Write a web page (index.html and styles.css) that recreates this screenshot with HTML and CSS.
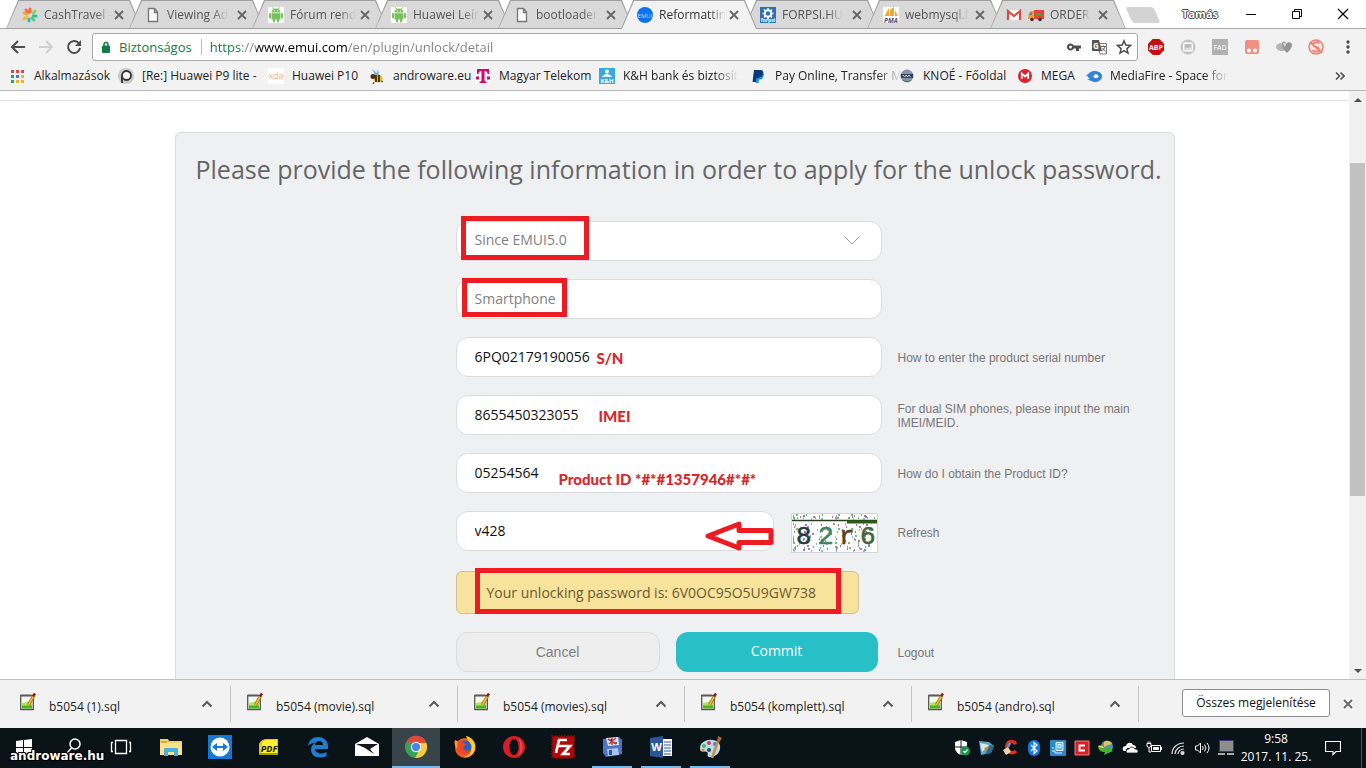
FILE: index.html
```html
<!DOCTYPE html>
<html lang="hu">
<head>
<meta charset="UTF-8" />
<meta name="viewport" content="width=device-width, initial-scale=1" />
<title>Reformatting</title>
<link rel="stylesheet" href="styles.css">
</head>
<body>

<!-- shared icons -->
<svg class="defs" aria-hidden="true">
  <symbol id="i-x" viewBox="0 0 10 10"><path d="M1 1l8 8M9 1l-8 8" fill="none" stroke="currentColor" stroke-width="1.8"/></symbol>
  <symbol id="i-page" viewBox="0 0 16 16"><path d="M3.5 1.5h6l3 3.5v9.500h-9zM9.500 1.500v4h3" fill="#fafafa" stroke="#777" stroke-width="1.300"/></symbol>
  <symbol id="i-android" viewBox="0 0 16 16"><path fill="#fff" d="M0 0h16v16H0z"/><g fill="#77c159"><path d="M3.500 5.500a4.500 4 0 0 1 9 0zM3.500 6.200h9v6.300h-9z"/><rect x="1" y="6" width="2" height="5.500" rx="1"/><rect x="13" y="6" width="2" height="5.500" rx="1"/><rect x="5" y="11" width="2" height="4.500" rx="1"/><rect x="9" y="11" width="2" height="4.500" rx="1"/><path d="M4.500.500l1.500 2M11.500.500l-1.500 2" stroke="#77c159"/></g><path d="M6 3.500h1v1H6zM9 3.500h1v1H9z" fill="#fff"/></symbol>
  <symbol id="i-up" viewBox="0 0 12 8"><path d="M1.500 6.500L6 2l4.500 4.500" fill="none" stroke="#5a5a5a" stroke-width="2"/></symbol>
  <symbol id="i-note" viewBox="0 0 16 18"><path d="M.700 2.500h12.600v14H.700z" fill="#f7fbef" stroke="#555" stroke-width="1.300"/><path d="M2 1v3M4 1v3M6 1v3M8 1v3M10 1v3" stroke="#666" stroke-width=".8"/><path d="M2 10c3-1 6-1 10-3v8.500H2z" fill="#b4e45c"/><path d="M2 12.500h10v3H2z" fill="#4db428"/><path d="M13.500 3L8.500 12" stroke="#8b5a18" stroke-width="3"/><path d="M13.500 3L8.500 12" stroke="#ffc02c" stroke-width="1.600"/><path d="M13 3.500L15 .500" stroke="#931616" stroke-width="2.500"/></symbol>
</svg>

<header class="tabstrip">
  <nav class="tabs">
    <div class="tab">
      <a href="#"><svg class="ico" viewBox="0 0 16 16" fill="none" stroke-width="3" stroke-linecap="round"><path d="M8 5V2" stroke="#f26a3d"/><path d="M11 6l2-2" stroke="#8bd06a"/><path d="M11.500 9H14" stroke="#2bb8a5"/><path d="M10 11l2 2" stroke="#4bd07a"/><path d="M7 12v2" stroke="#35b5c8"/><path d="M5 10l-3 2" stroke="#f5b93a"/><path d="M5 7L2 6" stroke="#f9a13c"/><path d="M6 5L4 3" stroke="#f36c3c"/></svg><span>CashTravel -</span></a>
      <button aria-label="Bezárás"><svg><use href="#i-x"/></svg></button>
    </div>
    <div class="tab">
      <a href="#"><svg class="ico"><use href="#i-page"/></svg><span>Viewing Ad</span></a>
      <button aria-label="Bezárás"><svg><use href="#i-x"/></svg></button>
    </div>
    <div class="tab">
      <a href="#"><svg class="ico"><use href="#i-android"/></svg><span>Fórum rend</span></a>
      <button aria-label="Bezárás"><svg><use href="#i-x"/></svg></button>
    </div>
    <div class="tab">
      <a href="#"><svg class="ico"><use href="#i-android"/></svg><span>Huawei Leír</span></a>
      <button aria-label="Bezárás"><svg><use href="#i-x"/></svg></button>
    </div>
    <div class="tab">
      <a href="#"><svg class="ico"><use href="#i-page"/></svg><span>bootloader</span></a>
      <button aria-label="Bezárás"><svg><use href="#i-x"/></svg></button>
    </div>
    <div class="tab active">
      <a href="#"><svg class="ico" viewBox="0 0 16 16"><circle cx="8" cy="8" r="8" fill="#0a74f0"/><text x="8" y="10.500" font-size="6" fill="#b9d8ff" text-anchor="middle">EMUI</text></svg><span>Reformattin</span></a>
      <button aria-label="Bezárás"><svg><use href="#i-x"/></svg></button>
    </div>
    <div class="tab">
      <a href="#"><svg class="ico" viewBox="0 0 16 16"><path fill="#2f6fb5" d="M0 0h16v16H0z"/><circle cx="8" cy="6.500" r="3.300" fill="none" stroke="#fff" stroke-width="2"/><path d="M8 1v2M8 10v2M2.500 6.500h2M11.500 6.500h2M4 2.500l1.500 1.500M12 2.500L10.500 4M4 10.500L5.500 9M12 10.500L10.500 9" stroke="#fff" stroke-width="1.500"/><text x="8" y="15" font-size="5" font-weight="bold" fill="#fff" text-anchor="middle">forpsi</text></svg><span>FORPSI.HU</span></a>
      <button aria-label="Bezárás"><svg><use href="#i-x"/></svg></button>
    </div>
    <div class="tab">
      <a href="#"><svg class="ico" viewBox="0 0 16 16"><path fill="#fff" d="M0 0h16v16H0z"/><path d="M6 1v8H1.500zM7 3l4-3v9H7zM12 3l3 6h-3z" fill="#f5a52d"/><text x="8" y="15.500" font-size="6.500" font-weight="bold" font-style="italic" fill="#4c4e79" text-anchor="middle">PMA</text></svg><span>webmysql.f</span></a>
      <button aria-label="Bezárás"><svg><use href="#i-x"/></svg></button>
    </div>
    <div class="tab">
      <a href="#"><svg class="ico" viewBox="0 0 16 16"><path fill="#fff" d="M1 3h14v10H1z"/><path d="M2 13V4l6 5 6-5v9" fill="none" stroke="#dd4b3e" stroke-width="2.200"/></svg><svg class="ico truck" viewBox="0 0 16 16"><path d="M6 3h10v9H5z" fill="#e8442e"/><path d="M1 6l2-2h3v8H0z" fill="#f29b2e"/><path d="M2 5.500h2V8H1.500z" fill="#5a86a8"/><circle cx="4" cy="12.500" r="1.800" fill="#333"/><circle cx="12" cy="12.500" r="1.800" fill="#333"/><path d="M8 6h5v3H8z" fill="#47a04a"/></svg><span>ORDER</span></a>
      <button aria-label="Bezárás"><svg><use href="#i-x"/></svg></button>
    </div>
    <button class="newtab" aria-label="Új lap"></button>
  </nav>
  <div class="window-controls">
    <span class="profile">Tamás</span>
    <button aria-label="Kis méret"><svg viewBox="0 0 12 12"><path d="M1 6.500h10" stroke="#000"/></svg></button>
    <button aria-label="Előző méret"><svg viewBox="0 0 12 12" fill="none" stroke="#000"><path d="M1.500 3.500h7v7h-7zM3.500 3.500v-2h7v7h-2"/></svg></button>
    <button aria-label="Ablak bezárása"><svg viewBox="0 0 12 12"><path d="M1 1l10 10M11 1L1 11" stroke="#000" stroke-width="1.200"/></svg></button>
  </div>
</header>

<div class="toolbar">
  <button aria-label="Vissza"><svg viewBox="0 0 16 16" fill="none" stroke="#4d4d4d" stroke-width="2"><path d="M15 8H2.500M8 2L2 8l6 6"/></svg></button>
  <button aria-label="Előre"><svg viewBox="0 0 16 16" fill="none" stroke="#d0d0d0" stroke-width="2"><path d="M1 8h12.500M8 2l6 6-6 6"/></svg></button>
  <button aria-label="Újratöltés"><svg viewBox="0 0 16 16"><path d="M13 4.500A6 6 0 1 0 14 9" fill="none" stroke="#4d4d4d" stroke-width="2"/><path d="M15 1v6H9z" fill="#4d4d4d"/></svg></button>
  <div class="omnibox">
    <svg class="lock" viewBox="0 0 10 12"><path d="M3 5V3.500a2 2 0 0 1 4 0V5" fill="none" stroke="#0b8043" stroke-width="1.500"/><rect x="1" y="4.500" width="8" height="7.500" rx="1" fill="#0b8043"/></svg>
    <span class="secure">Biztonságos</span>
    <input class="url" type="text" aria-label="Cím" value="https://www.emui.com/en/plugin/unlock/detail">
    <button aria-label="Jelszavak"><svg viewBox="0 0 16 16"><path d="M4.500 4.500a3.500 3.500 0 1 0 3.200 5H10V12h3V9.500h2v-3H7.700a3.500 3.500 0 0 0-3.200-2zm0 2a1.500 1.500 0 1 1 0 3 1.500 1.500 0 0 1 0-3z" fill="#4d4d4d"/></svg></button>
    <button aria-label="Fordítás"><svg viewBox="0 0 16 16"><path d="M7 4.500h8.500v10.500H9z" fill="#fff" stroke="#777"/><path d="M1 1h7l3 11H1z" fill="#555"/><text x="2" y="9.500" font-size="8" font-weight="bold" fill="#fff">G</text><path d="M10 7.500h5M12.500 6.500v1M14 7.500c-.5 2-2 4-3 5M11.500 9l3 3.500" fill="none" stroke="#666"/></svg></button>
    <button aria-label="Könyvjelző"><svg viewBox="0 0 16 16"><path d="M8 1.800l1.800 4.300 4.700.4-3.600 3.100 1.100 4.600L8 11.700l-4 2.500 1.100-4.600L1.500 6.500l4.700-.4z" fill="none" stroke="#4d4d4d" stroke-width="1.500"/></svg></button>
  </div>
  <div class="extensions">
    <button aria-label="ABP"><svg viewBox="0 0 16 16"><path d="M4.700 0h6.600L16 4.700v6.600L11.300 16H4.700L0 11.300V4.700z" fill="#c70d0c"/><text x="8" y="10.800" font-size="7" font-weight="bold" fill="#fff" text-anchor="middle">ABP</text></svg></button>
    <button aria-label="Képek"><svg viewBox="0 0 16 16"><circle cx="8" cy="8" r="7.500" fill="#c3c3c3"/><rect x="3" y="3.500" width="10" height="9" rx="1" fill="#fff"/><path d="M4.500 5h7v6h-7z" fill="#bbb"/><path d="M5 10.500l2-2 1.500 1L10 8l1.500 2.500z" fill="#eee"/></svg></button>
    <button aria-label="FAD"><svg viewBox="0 0 16 16"><path d="M0 0h16v16H0z" fill="#b1b1b1"/><text x="8" y="10.800" font-size="7" fill="#fff" text-anchor="middle">FAD</text></svg></button>
    <button aria-label="Tampermonkey"><svg viewBox="0 0 16 16"><rect x="1" y="1" width="14" height="14" rx="2" fill="#f09080"/><circle cx="5" cy="11.500" r="2" fill="#fff"/><circle cx="11" cy="11.500" r="2" fill="#fff"/></svg></button>
    <button aria-label="Szív"><svg viewBox="0 0 16 16"><ellipse cx="6" cy="8" rx="6" ry="4" fill="#b5b5b5"/><path d="M6 4c2-3 4-1 4 1 2-3 6-2 6 1s-3 6-5 8C9 12 6 9 6 4z" fill="#959595"/><path d="M7 5c1-2 3-1 3 0s-1 2-1 3z" fill="#dedede"/></svg></button>
    <button aria-label="Script"><svg viewBox="0 0 16 16"><circle cx="8" cy="8" r="7" fill="#fde7e5" stroke="#f07f75" stroke-width="1.500"/><path d="M11.500 4.500C9 2 4.500 3.500 5.500 6.500c1 2 5 1 5.500 3.500.5 3-4.500 3.500-6.500 1M2 3l12 11" fill="none" stroke="#f07f75" stroke-width="1.800"/></svg></button>
    <button aria-label="Menü"><svg viewBox="0 0 16 16" fill="#4d4d4d"><circle cx="8" cy="3" r="1.700"/><circle cx="8" cy="8" r="1.700"/><circle cx="8" cy="13" r="1.700"/></svg></button>
  </div>
</div>

<nav class="bookmarks">
  <a href="#"><svg class="ico" viewBox="0 0 16 16"><path d="M1 2h3v3H1zM6 2h3v3H6zM11 2h3v3h-3z" fill="#e04a3f"/><path d="M1 7h3v3H1z" fill="#25a163"/><path d="M6 7h3v3H6z" fill="#3f7de0"/><path d="M11 7h3v3h-3zM6 12h3v3H6zM11 12h3v3h-3z" fill="#efb42e"/><path d="M1 12h3v3H1z" fill="#25a163"/></svg><span>Alkalmazások</span></a>
  <a href="#"><svg class="ico" viewBox="0 0 16 16"><circle cx="8" cy="8" r="8" fill="#c9c9c9"/><circle cx="8.500" cy="7.500" r="4.500" fill="#f5f5f5" stroke="#333" stroke-width="1.800"/><path d="M4 8v7" stroke="#333" stroke-width="1.800"/></svg><span>[Re:] Huawei P9 lite -</span></a>
  <a href="#"><svg class="ico" viewBox="0 0 16 16"><path fill="#fff" d="M0 0h16v16H0z"/><text x="8" y="11" font-size="9" fill="#f5b384" text-anchor="middle">xda</text></svg><span>Huawei P10</span></a>
  <a href="#"><svg class="ico" viewBox="0 0 16 16"><path d="M6 7L3 1l5 4 1-4 1 6z" fill="#6eb7d8"/><ellipse cx="9" cy="10.500" rx="4.500" ry="4" fill="#f0b52a"/><path d="M7 7v7M10 7v7" stroke="#332310" stroke-width="1.700"/><circle cx="4" cy="8.500" r="2.500" fill="#443219"/><path d="M5 14l-1 2M12 13l2 1" stroke="#332310"/></svg><span>androware.eu</span></a>
  <a href="#"><svg class="ico" viewBox="0 0 16 16"><path fill="#fff" d="M1 0h14v16H1z"/><path d="M2 1h12v5h-1.500c0-2-1-3-3-3v9c0 1 .5 1.500 2 1.500V15H4.500v-1.500c1.500 0 2-.5 2-1.500V3c-2 0-3 1-3 3H2zM1 8.500h3v3H1zM12 8.500h3v3h-3z" fill="#d4056d"/></svg><span>Magyar Telekom</span></a>
  <a href="#"><svg class="ico" viewBox="0 0 16 16"><path fill="#3aa9e0" d="M0 0h16v16H0z"/><circle cx="8" cy="3.500" r="2" fill="#fff"/><path d="M3 9c2-4 8-4 10 0z" fill="#fff"/><text x="8" y="15" font-size="6" font-weight="bold" fill="#fff" text-anchor="middle">K&amp;H</text></svg><span class="fade">K&amp;H bank és biztosít</span></a>
  <a href="#"><svg class="ico" viewBox="0 0 16 16"><path d="M3 2h6c3 0 4 2 3 5-.6 2-2 3-5 3l-1 4H1.500z" fill="#063a80"/><path d="M12 5c1 1 1 2 .5 3.500C12 11 10 11.500 8 11.500L7.500 15h-3L5.500 10c4 .5 6.500-1 6.500-5z" fill="#1a94d9"/></svg><span class="fade">Pay Online, Transfer M</span></a>
  <a href="#"><svg class="ico" viewBox="0 0 16 16"><circle cx="8" cy="8" r="6.500" fill="#8a94a8"/><path d="M2 6h12v4H2z" fill="#33405e"/><path d="M4 7l1.500 2L7 7l1.500 2L10 7l1.500 2" fill="none" stroke="#cbd2e0"/><path d="M4 12c2 2 6 2 8 0" stroke="#4d7050" fill="none"/></svg><span>KNOÉ - Főoldal</span></a>
  <a href="#"><svg class="ico" viewBox="0 0 16 16"><circle cx="8" cy="8" r="7" fill="#d9232e"/><path d="M4.800 11V5.500L8 8.500l3.200-3V11" fill="none" stroke="#fff" stroke-width="1.800"/></svg><span>MEGA</span></a>
  <a href="#"><svg class="ico" viewBox="0 0 16 16"><path d="M0 7c3 0 3-4 8-4 4 0 8 1.500 8 5s-3 6-7 6c-3 0-4-2-8-2 1-1 2-1 3-1-2-1-2-3-4-4z" fill="#2f83d8"/><ellipse cx="10" cy="8.300" rx="2.500" ry="2" fill="#f4f9ff"/></svg><span class="fade">MediaFire - Space for</span></a>
  <button class="more" aria-label="További könyvjelzők"><svg viewBox="0 0 10 10"><path d="M1 1.500L4.500 5 1 8.500M5.500 1.500L9 5 5.500 8.500" fill="none" stroke="#4d4d4d" stroke-width="1.600"/></svg></button>
</nav>

<div class="viewport">
  <main class="page">
    <div class="page-head"></div>
    <form class="card" onsubmit="return false">
      <h1>Please provide the following information in order to apply for the unlock password.</h1>

      <div class="row">
        <div class="field">
          <select aria-label="EMUI version"><option>Since EMUI5.0</option></select>
          <svg class="caret" viewBox="0 0 16 9"><path d="M.500.500L8 8 15.500.500" fill="none" stroke="#999"/></svg>
          <span class="mark mark-version"></span>
        </div>
      </div>
      <div class="row">
        <div class="field">
          <input class="muted" type="text" aria-label="Product type" value="Smartphone" readonly>
          <span class="mark mark-type"></span>
        </div>
      </div>
      <div class="row">
        <div class="field">
          <input id="sn" type="text" value="6PQ02179190056">
          <span class="note note-sn">S/N</span>
        </div>
        <label class="hint" for="sn">How to enter the product serial number</label>
      </div>
      <div class="row">
        <div class="field">
          <input id="imei" type="text" value="8655450323055">
          <span class="note note-imei">IMEI</span>
        </div>
        <label class="hint" for="imei">For dual SIM phones, please input the main IMEI/MEID.</label>
      </div>
      <div class="row">
        <div class="field">
          <input id="pid" type="text" value="05254564">
          <span class="note note-pid">Product ID *#*#1357946#*#*</span>
        </div>
        <label class="hint" for="pid">How do I obtain the Product ID?</label>
      </div>
      <div class="row">
        <div class="field captcha-field">
          <div class="captcha-input">
            <input type="text" aria-label="Verification code" value="v428">
            <svg class="arrow" viewBox="0 0 69 30"><path d="M3 15L34 3v6.500h32v12H34V27z" fill="#fff" stroke="#ed1c24" stroke-width="5" stroke-linejoin="round"/></svg>
          </div>
          <svg class="captcha" viewBox="0 0 87 40">
            <path fill="#fff" stroke="#d5d5d5" d="M.500.500h86v39H.500z"/>
            <g fill="none" stroke-width="1.500">
              <path stroke="#6b4fd8" stroke-dasharray="1 9 2 14 1 16 1 17" d="M2 3h82M4 12h80M3 19h80M2 26h82M6 33h79M2 37h82"/>
              <path stroke="#3fa94d" stroke-dasharray="2 8 1 15 1 15 2 11" d="M5 2h80M2 5h82M5 16h80M9 23h75M2 30h80M3 35h80"/>
              <path stroke="#c0398f" stroke-dasharray="1 12 2 17 1 19" d="M9 4h75M3 14h80M8 21h76M2 28h82M4 36h80"/>
              <path stroke="#4db7d0" stroke-dasharray="1 16 1 9 2 13" d="M3 6h80M9 17h75M2 24h82M8 31h76M3 38h80"/>
              <path stroke="#a8763a" stroke-dasharray="1 17 1 21 2 10" d="M6 5h78M2 11h82M12 27h72M4 34h80"/>
            </g>
            <path d="M1 7.500h85" stroke="#24401a" stroke-width="1.500"/>
            <path d="M56 9h30" stroke="#2e5a12" stroke-width="3"/>
            <g font-size="26" class="mono" stroke-width=".6">
              <text x="5" y="31" fill="#243d3c" stroke="#243d3c">8</text>
              <text x="27" y="31" fill="#3d8560" stroke="#3d8560">2</text>
              <text x="48" y="31" fill="#5c3f18" stroke="#5c3f18">r</text>
              <text x="69" y="31" fill="#4a6336" stroke="#4a6336">6</text>
            </g>
          </svg>
        </div>
        <a class="hint" href="#">Refresh</a>
      </div>
      <div class="row">
        <div class="field">
          <output class="result">Your unlocking password is: 6V0OC95O5U9GW738</output>
          <span class="mark mark-result"></span>
        </div>
      </div>
      <div class="row">
        <div class="field actions">
          <button class="cancel" type="button">Cancel</button>
          <button class="commit">Commit</button>
        </div>
        <a class="hint" href="#">Logout</a>
      </div>
    </form>
  </main>
  <div class="scrollbar">
    <button aria-label="Fel"><svg viewBox="0 0 8 4"><path d="M0 4l4-4 4 4z" fill="#505050"/></svg></button>
    <div class="track"><div class="thumb"></div></div>
    <button aria-label="Le"><svg viewBox="0 0 8 4"><path d="M0 0l4 4 4-4z" fill="#505050"/></svg></button>
  </div>
</div>

<section class="downloads">
  <div class="file"><svg class="note-ico"><use href="#i-note"/></svg><a href="#">b5054 (1).sql</a><button aria-label="Műveletek"><svg><use href="#i-up"/></svg></button></div>
  <div class="file"><svg class="note-ico"><use href="#i-note"/></svg><a href="#">b5054 (movie).sql</a><button aria-label="Műveletek"><svg><use href="#i-up"/></svg></button></div>
  <div class="file"><svg class="note-ico"><use href="#i-note"/></svg><a href="#">b5054 (movies).sql</a><button aria-label="Műveletek"><svg><use href="#i-up"/></svg></button></div>
  <div class="file"><svg class="note-ico"><use href="#i-note"/></svg><a href="#">b5054 (komplett).sql</a><button aria-label="Műveletek"><svg><use href="#i-up"/></svg></button></div>
  <div class="file"><svg class="note-ico"><use href="#i-note"/></svg><a href="#">b5054 (andro).sql</a><button aria-label="Műveletek"><svg><use href="#i-up"/></svg></button></div>
  <button class="show-all">Összes megjelenítése</button>
  <button class="shelf-close" aria-label="Bezárás"><svg><use href="#i-x"/></svg></button>
</section>

<footer class="taskbar">
  <div class="apps">
    <button aria-label="Start"><svg viewBox="0 0 24 24"><path d="M4 6l7-1v7H4zM12 5l8-1v8h-8zM4 13h7v7l-7-1zM12 13h8v8l-8-1z" fill="#fff"/></svg></button>
    <button aria-label="Keresés"><svg viewBox="0 0 24 24" fill="none" stroke="#fff" stroke-width="1.500"><circle cx="14" cy="9" r="5"/><path d="M10.500 13L6 18"/></svg></button>
    <button aria-label="Feladatnézet"><svg viewBox="0 0 24 24" fill="none" stroke="#fff" stroke-width="1.300"><path d="M5.500 5.500h11v13h-11zM3 7.500H1.500v9H3M19 7.500h1.500v9H19"/></svg></button>
    <button aria-label="Fájlkezelő"><svg viewBox="0 0 24 24"><path d="M1 4h8l1 2h13v14H1z" fill="#f3cf6b"/><path d="M2 6h6v2H2z" fill="#d8a93f"/><path d="M1 8h22v12H1z" fill="#ffe08c"/><path d="M5 21v-7q0-1 1-1h12q1 0 1 1v7h-4v-4H9v4z" fill="#46b0e3"/></svg></button>
    <button aria-label="TeamViewer"><svg viewBox="0 0 24 24"><path d="M0 0h24v24H0z" fill="#1478d4"/><circle cx="12" cy="12" r="9.500" fill="#fff"/><path d="M4 12l5-4v3h6V8l5 4-5 4v-3H9v3z" fill="#1478d4"/></svg></button>
    <button aria-label="PDF"><svg viewBox="0 0 24 24"><path d="M2 9Q4 4 10 4h11v15H2z" fill="#d9c91a"/><path d="M2 18h19v2H2z" fill="#a89b10"/><path d="M5 8Q6 5 10 5h10v13H4z" fill="#fff02c"/><text x="12" y="16.500" font-size="9" font-weight="bold" font-style="italic" fill="#111" text-anchor="middle">PDF</text></svg></button>
    <button aria-label="Edge"><svg viewBox="0 0 24 24"><path d="M2 11C3 5 7 2 12 2c6 0 10 4 10 9v3H9c0 3 3 4.500 6 4.500 2 0 4-.5 5.500-1.500v4c-2 1-4 1.500-6.500 1.500-6 0-9-3.500-9-8 0-3 2-6 5-7-3 0-6 1.500-8 3.500zM9 10h8c0-2-1-4-4-4-2 0-4 1.500-4 4z" fill="#1a7fd4"/></svg></button>
    <button aria-label="Posta"><svg viewBox="0 0 24 24"><path d="M0 9l12-7 12 7v12H0z" fill="#fff"/><path d="M1 9h22l-8 5 4 5-9-6z" fill="#10181c"/></svg></button>
    <button class="current" aria-label="Chrome"><svg viewBox="0 0 24 24"><circle cx="12" cy="12" r="11" fill="#33a456"/><path d="M12 12L2.500 6.500A11 11 0 0 1 22.500 8z" fill="#dd4b3c"/><path d="M12 8h10.300A11 11 0 0 1 11 23l5-9z" fill="#fccc3c"/><circle cx="12" cy="12" r="5.200" fill="#fff"/><circle cx="12" cy="12" r="4.200" fill="#4a86ea"/></svg></button>
    <button aria-label="Firefox"><svg viewBox="0 0 24 24"><circle cx="12" cy="13" r="10" fill="#f4571d"/><path d="M13 1c6 1 11 7 9 14-2 5-7 8-11 7 6-2 8-5 7-11-1-4-4-6-5-10z" fill="#ffd026"/><circle cx="12" cy="12" r="6.500" fill="#2a60b5"/><path d="M2 5l4 2 2-1 2 2 4 1c-2 1-3 2-4 4 1 3 4 3 7 2-2 4-8 5-11 2-3-2-5-7-4-12z" fill="#ed4528"/><path d="M2 5l3 2-1 7c-2-2-3-6-2-9z" fill="#ff9a25"/></svg></button>
    <button aria-label="Opera"><svg viewBox="0 0 24 24"><path fill-rule="evenodd" d="M12 1a11 11 0 1 0 0 22 11 11 0 0 0 0-22zm0 3c3 0 4.500 4 4.500 8S15 20 12 20s-4.500-4-4.500-8S9 4 12 4z" fill="#d91c25"/><path d="M16 3a11 11 0 0 1 0 18c3-4 3-14 0-18z" fill="#ed474c"/></svg></button>
    <button aria-label="FileZilla"><svg viewBox="0 0 24 24"><path d="M1 1h22v22H1z" fill="#b50505" stroke="#6a0808" stroke-width="2" stroke-dasharray="2 1"/><path d="M5 18L8 5h8M7 11h6M12 11h7l-7 8h7" fill="none" stroke="#fff" stroke-width="2.700"/></svg></button>
    <button class="running" aria-label="Total Commander"><svg viewBox="0 0 24 24"><path d="M3 4l16-2 3 3v14l-16 3-3-4z" fill="#4b75c4"/><path d="M6 3l12-1 1 8-11 1z" fill="#d9e5f7"/><path d="M8 4l8 5M16 3L9 9M12 3v7" stroke="#d63834" stroke-width="1.500"/><path d="M9 5l3-1v2zM14 8l3-1v2z" fill="#24418a"/><path d="M7 14l11-1 1 7-11 1z" fill="#a6c5f1"/><path d="M9 15h3v5H9z" fill="#31548f"/></svg></button>
    <button class="running" aria-label="Word"><svg viewBox="0 0 24 24"><path d="M12 4h11v17H12z" fill="#fff"/><path d="M15 7h7M15 10h7M15 13h7M15 16h7M15 19h7" stroke="#2a5699" stroke-width="1.200"/><path d="M1 3l13-2v22L1 21z" fill="#2a5699"/><text x="7.500" y="16" font-size="11" font-weight="bold" fill="#fff" text-anchor="middle">W</text></svg></button>
    <button class="running" aria-label="Paint"><svg viewBox="0 0 24 24"><path d="M2 13C2 8 8 4 14 5c6 0 9 4 8 9-1 6-8 9-11 8-3-1 0-4-2-5-2-2-7 2-7-4z" fill="#b8dded"/><circle cx="6" cy="11" r="2" fill="#4eb954"/><circle cx="11" cy="8" r="2" fill="#de3d3d"/><circle cx="17" cy="9" r="2" fill="#477fd2"/><circle cx="11" cy="15" r="2" fill="#27485a"/><circle cx="5" cy="15" r="1.500" fill="#e9872d"/><path d="M20 6l-6 17" stroke="#d08b42" stroke-width="2.500"/><path d="M19 7l1-6 4 2-3 5z" fill="#a46a3b"/></svg></button>
  </div>
  <div class="tray">
    <button aria-label="Windows Defender"><svg viewBox="0 0 16 16"><path d="M7 0l6 2v6c0 3-3 6-6 7-3-1-6-4-6-7V2z" fill="#fff"/><path d="M7 0v15M1 7h12" stroke="#10181c"/><circle cx="11.500" cy="11" r="4.500" fill="#14964c"/><path d="M9.500 11l1.500 1.500 2.500-3" fill="none" stroke="#fff" stroke-width="1.200"/></svg></button>
    <button aria-label="Lejátszó"><svg viewBox="0 0 16 16"><path d="M1 1l10 1 5 4-3 7-10 2z" fill="#5ba9c8"/><path d="M2 3l9 2-7 7z" fill="#d9e8ed"/><path d="M6 8l6-2-4 5z" fill="#d28a38"/><path d="M12 5l4 1-3 7-6 1z" fill="#2f6887"/></svg></button>
    <button aria-label="CCleaner"><svg viewBox="0 0 16 16"><path d="M14 4C10-1 4 2 5 8c1 5 6 6 9 3" fill="none" stroke="#d33227" stroke-width="3.500"/><path d="M1 10l5-3 3 5-5 3z" fill="#f0d3a6"/><path d="M6 7l2-4" stroke="#4f9fd0" stroke-width="2.500"/></svg></button>
    <button aria-label="Bluetooth"><svg viewBox="0 0 16 16"><rect x="2" width="12" height="16" rx="6" fill="#0f7ae0"/><path d="M5 5l6 6-3 2.500v-11L11 5l-6 6" fill="none" stroke="#fff" stroke-width="1.200"/></svg></button>
    <button aria-label="Grafika"><svg viewBox="0 0 16 16"><rect width="16" height="16" rx="1" fill="#2a8ac8"/><path d="M6 2.500h7v8H6z" fill="#65bbe8" stroke="#d9f2ff"/><path d="M8 4.500h3v3H8zM2 8h2M2 11h3v2h7" fill="none" stroke="#d9f2ff"/></svg></button>
    <button aria-label="Comodo"><svg viewBox="0 0 16 16"><path d="M1 1h14v14H1z" fill="#d91e25" stroke="#f07f7f"/><path d="M11 5.500H5.500v5H11" fill="none" stroke="#fff" stroke-width="2"/></svg></button>
    <button aria-label="Letöltéskezelő"><svg viewBox="0 0 16 16"><circle cx="9" cy="6.500" r="6" fill="#5d8fc4"/><path d="M6 2c3-2 7-1 8 2l-4 1-4 2z" fill="#e6c64a"/><path d="M0 6c0 4 3 6 7 6l-1 3 9-4-5-5v2C6 9 3 8 0 6z" fill="#42b52c"/><path d="M0 6c3-1 5 0 6 2-2 0-4 0-6-2z" fill="#e9e03a"/></svg></button>
    <button aria-label="OneDrive"><svg viewBox="0 0 16 16"><path d="M1 10c-1-3 1-4 3-4 1-4 6-4 7-1 2 0 3 1 3 3H7c-3 0-3 2-3 3-2 0-3 0-3-1z" fill="#fff"/><path d="M5 13c-2-2 0-4 2-4 1-3 5-2 6 0 3 0 4 3 2 4z" fill="#fff" stroke="#10181c" stroke-width=".8"/></svg></button>
    <button aria-label="Akkumulátor"><svg viewBox="0 0 16 16" fill="none" stroke="#fff"><path d="M5.500 5.500h9v6h-9zM15.500 7v3M1 3.500h4v3q-2 2-4 0zM2 3.500V1.500M4 3.500V1.500M3 8v4h2"/><path d="M7.500 7.500h5v2h-5z" fill="#fff"/></svg></button>
    <button aria-label="Hálózat"><svg viewBox="0 0 16 16" fill="none" stroke="#ddd" stroke-width="1.200"><path d="M2 14C2 8 7 3 14 3M5 14c0-4 4-8 9-8M8 14c0-3 3-5 6-5"/><circle cx="12.500" cy="13" r="1.500" fill="#ddd"/></svg></button>
    <button aria-label="Hangerő"><svg viewBox="0 0 16 16" fill="none" stroke="#fff"><path d="M1.500 6h2l3-3v10l-3-3h-2zM8.500 6q1.500 2 0 4M10.500 4.500q3 3.500 0 7M13 3q4 5 0 10"/></svg></button>
    <button aria-label="Billentyűzet"><svg viewBox="0 0 16 16"><path d="M1.500.500h14v11h-14z" fill="#8d8d8d" stroke="#333a7d"/><path d="M0 13h7v2H0zM9 13h7v2H9z" fill="#aaa"/></svg></button>
    <time class="clock">9:58<br>2017. 11. 25.</time>
    <button class="action-center" aria-label="Műveletközpont"><svg viewBox="0 0 16 16"><path d="M.500 1.500h15v10h-4.500l-3 3v-3H.500z" fill="none" stroke="#fff" stroke-width="1.200"/></svg></button>
  </div>
  <div class="watermark">androware.hu</div>
</footer>

</body>
</html>
```
FILE: styles.css
```css
* { box-sizing: border-box; }
body {
  margin: 0; height: 100vh; overflow: hidden;
  display: flex; flex-direction: column;
  font-family: "Open Sans", "Noto Sans", sans-serif; font-size: 12px; line-height: 16px;
  color: #222; background: #fff;
}
button {
  padding: 0; border: 0; background: none; font: inherit; color: inherit; cursor: pointer;
  display: flex; align-items: center; justify-content: center;
}
a { color: inherit; text-decoration: none; }
svg { display: block; flex: none; }
.defs { position: absolute; width: 0; height: 0; }
.ico { width: 16px; height: 16px; }

/* tabs */
.tabstrip {
  display: flex; height: 29px; flex: none;
  box-shadow: inset 0 -1px #a8a8a8;
}
.tabs { display: flex; flex: 1; min-width: 0; padding-left: 6px; }
.tab {
  position: relative; flex: 0 1 136px; min-width: 0; height: 29px; margin-right: -13px;
  display: flex; align-items: center; padding: 1px 14px 0 16px; color: #555;
  z-index: 1;
}
.tab::before, .tab::after {
  content: ""; position: absolute; inset: 0; z-index: -1;
  background: #a0a0a0;
  clip-path: polygon(0 100%, 12px 0, calc(100% - 12px) 0, 100% 100%);
}
.tab::after { inset: 1px; background: #d9d9d9; }
.tab.active { z-index: 2; color: #333; }
.tab.active::after { bottom: 0; background: #f2f2f2; }
.tab a { display: flex; align-items: center; gap: 6px; flex: 1; min-width: 0; }
.tab a span {
  white-space: nowrap;
  -webkit-mask-image: linear-gradient(to right, #000 75%, transparent);
  mask-image: linear-gradient(to right, #000 75%, transparent);
}
.tab button { width: 18px; height: 18px; }
.tab button svg, .shelf-close svg { width: 10px; height: 10px; color: #666; }
.newtab {
  width: 28px; height: 16px; margin: 7px 0 0 16px; background: #d3d3d3;
  border-radius: 3px; transform: skewX(24deg); flex: none;
}
.window-controls { display: flex; align-items: center; flex: none; height: 28px; }
.window-controls button { width: 46px; height: 28px; }
.window-controls svg { width: 12px; height: 12px; }
.profile {
  margin-right: 10px; color: #fff; font-size: 11px; font-weight: bold;
  text-shadow: 1px 0 #444, -1px 0 #444, 0 1px #444, 0 -1px #444;
}

/* toolbar */
.toolbar {
  display: flex; align-items: center; height: 33px; flex: none;
  padding: 4px 2px 1px 4px; background: #f2f2f2;
}
.toolbar > button { width: 28px; height: 28px; }
.toolbar button svg { width: 16px; height: 16px; }
.omnibox {
  flex: 1; display: flex; align-items: center; height: 28px; margin-left: 4px; padding: 0 1px 0 8px;
  background: #fff; border: 1px solid #a9a9a9; border-radius: 3px; font-size: 13px;
}
.lock { width: 10px; height: 12px; }
.secure { color: #0b8043; margin-left: 8px; padding-right: 9px; border-right: 1px solid #bbb; }
.url {
  flex: 1; min-width: 0; border: 0; padding: 0 0 0 8px; font: inherit; outline: 0;
  color: transparent; caret-color: #000;
  background: linear-gradient(to right, #0b8043 39px, #808080 39px, #808080 54px, #000 54px, #000 146px, #808080 146px);
  -webkit-background-clip: text; background-clip: text;
}
.omnibox button { width: 25px; height: 26px; }
.extensions { display: flex; padding-left: 2px; }
.extensions button { width: 32px; height: 28px; }

/* bookmarks */
.bookmarks {
  display: grid; align-items: center; height: 29px; flex: none;
  grid-template-columns: 108px 150px 101px 106px 124px 152px 148px 118px 69px 1fr 24px;
  padding: 0 14px 0 10px; background: #f2f2f2; border-bottom: 1px solid #b6b6b6;
}
.bookmarks a { display: flex; align-items: center; gap: 8px; min-width: 0; }
.bookmarks span { white-space: nowrap; }
.bookmarks .fade {
  -webkit-mask-image: linear-gradient(to right, #000 80%, transparent);
  mask-image: linear-gradient(to right, #000 80%, transparent);
}
.more svg { width: 10px; height: 10px; }

/* page */
.viewport { flex: 1; min-height: 0; display: flex; }
.page { flex: 1; overflow: hidden; }
.page-head { height: 10px; border-bottom: 1px solid #e4e4e4; }
.card {
  max-width: 1000px; margin: 31px auto 0; padding: 16px 20px 40px;
  background: #eff0f2; border: 1px solid #dadada; border-radius: 6px;
  display: flex; flex-direction: column; gap: 18px;
}
.card h1 { margin: 0 0 14px; font-size: 25px; line-height: 40px; font-weight: normal; color: #666; white-space: nowrap; }
.row { display: flex; align-items: center; gap: 16px; padding-left: 260px; }
.field { position: relative; width: 426px; flex: none; }
.field input, .field select {
  display: block; width: 100%; height: 40px; padding: 0 18px 2px;
  border: 1px solid #dcdcdc; border-radius: 12px; background: #fff;
  font: inherit; font-size: 14px; color: #111; outline: 0;
}
.field select { appearance: none; color: #808080; }
.field .muted { color: #808080; }
.caret { position: absolute; right: 22px; top: 15px; width: 16px; height: 9px; pointer-events: none; }
.hint { width: 260px; padding-top: 1px; font-family: "Liberation Sans", Arial, sans-serif; font-size: 12px; line-height: 14px; color: #777; }

/* red marks drawn over the form */
.mark { position: absolute; border: 5px solid #ed1c24; pointer-events: none; }
.mark-version { left: 5px; top: -5px; width: 128px; height: 44px; }
.mark-type { left: 6px; top: -1px; width: 105px; height: 39px; }
.mark-result { left: 19px; top: -3px; width: 366px; height: 46px; }
.note { position: absolute; font-family: Lato, sans-serif; font-size: 15px; font-weight: 900; line-height: 18px; color: #d9262d; white-space: nowrap; }
.note-sn { left: 141px; top: 12px; }
.note-imei { left: 143px; top: 12px; }
.note-pid { left: 103px; top: 17px; }
.arrow { position: absolute; right: 0; top: 10px; width: 69px; height: 30px; }

.captcha-field { display: flex; gap: 17px; align-items: flex-start; height: 42px; }
.captcha-input { position: relative; width: 318px; }
.captcha { width: 87px; height: 40px; margin-top: 2px; }
.mono { font-family: "Liberation Mono", monospace; }
.result {
  display: block; width: 403px; height: 43px; padding-left: 30px; line-height: 41px;
  background: #f7e39b; border: 1px solid #cdc09a; border-radius: 6px; font-size: 14px; color: #6c5a33;
}
.actions { display: flex; gap: 16px; padding-right: 4px; }
.actions button { flex: 1; height: 40px; border-radius: 12px; }
.cancel { border: 1px solid #dcdcdc; background: #eee; color: #808080; font-family: "Liberation Sans", Arial, sans-serif; font-size: 14px; }
.commit { padding-bottom: 2px; background: #28c0c8; color: #fff; font-size: 14px; }

.scrollbar { width: 17px; flex: none; display: flex; flex-direction: column; background: #f1f1f1; }
.scrollbar button { height: 17px; }
.scrollbar svg { width: 8px; height: 4px; }
.track { flex: 1; }
.thumb { height: 60%; position: relative; top: 10%; margin: 0 1px; background: #c1c1c1; }

/* downloads */
.downloads {
  display: flex; align-items: center; height: 49px; flex: none;
  padding: 0 8px 0 4px; background: #f2f2f2; border-top: 1px solid #c0c0c0;
}
.file {
  flex: 0 1 227px; min-width: 0; height: 36px; display: flex; align-items: center;
  padding: 0 14px 0 16px; border-right: 1px solid #c4c4c4;
}
.note-ico { width: 16px; height: 18px; margin-bottom: 4px; }
.file a { flex: 1; padding: 5px 0 0 13px; white-space: nowrap; }
.file button { width: 18px; height: 18px; }
.file button svg { width: 12px; height: 8px; }
.show-all {
  margin-left: auto; width: 148px; height: 28px; margin-bottom: 3px;
  background: #fff; border: 1px solid #8c8c8c; border-radius: 3px; color: #111;
}
.shelf-close { width: 20px; height: 20px; margin-left: 8px; }

/* taskbar */
.taskbar {
  position: relative; display: flex; justify-content: space-between; height: 40px; flex: none;
  background: #0a1318; color: #fff;
}
.apps { display: flex; gap: 1px; }
.apps button { width: 48px; height: 40px; border-bottom: 2px solid transparent; }
.apps svg { width: 24px; height: 24px; }
.apps .current { background: #39434a; border-bottom-color: #76b9ed; }
.apps .running {
  background: linear-gradient(#76b9ed, #76b9ed) center bottom / 40px 2px no-repeat border-box;
}
.tray { display: flex; align-items: center; padding-right: 9px; border-right: 1px solid #4a5357; margin-right: 4px; }
.tray button { width: 24px; height: 40px; }
.tray button svg { width: 16px; height: 16px; }
.clock { width: 76px; text-align: center; line-height: 18px; white-space: nowrap; }
.tray .action-center { width: 38px; }
.watermark {
  position: absolute; left: 10px; bottom: 4px; font-family: "DejaVu Sans", sans-serif;
  font-size: 12px; font-weight: bold; line-height: 16px;
  text-shadow: 1px 1px #000, -1px -1px #000, 1px -1px #000, -1px 1px #000;
}
```
